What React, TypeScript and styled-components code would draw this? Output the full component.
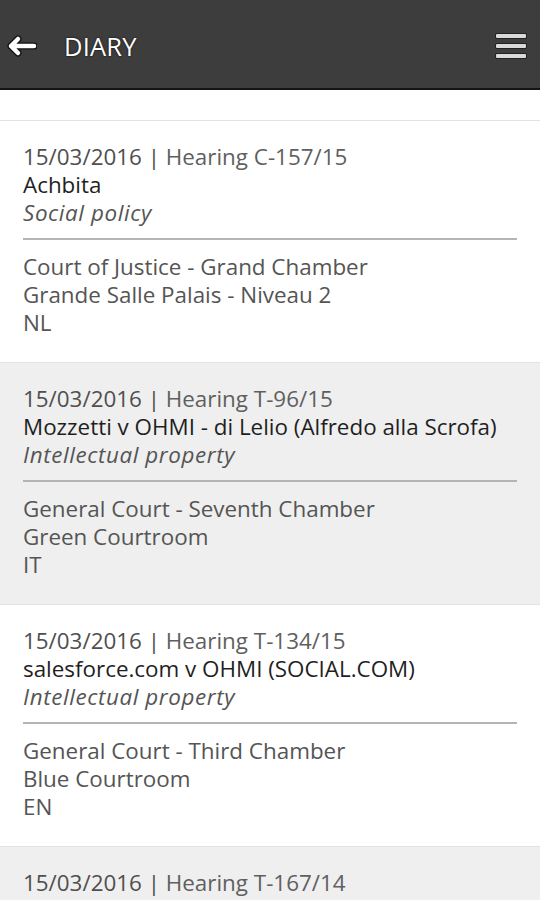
import React from "react";
import styled, { createGlobalStyle } from "styled-components";

const Global = createGlobalStyle`
  html, body { margin: 0; padding: 0; background: #ffffff; }
  body { font-family: "Open Sans", "DejaVu Sans", sans-serif; overflow: hidden; }
  * { box-sizing: border-box; }
`;

const Page = styled.div`
  width: 540px;
  height: 900px;
  overflow: hidden;
  background: #ffffff;
`;

const TopBar = styled.header`
  height: 90px;
  background: #3d3d3d;
  border-bottom: 2px solid #141414;
  display: flex;
  align-items: center;
  padding: 3px 14px 0 5px;
`;

const BackButton = styled.div`
  width: 32px;
  height: 24px;
  display: flex;
  align-items: center;
  justify-content: center;
`;

const Title = styled.h1`
  margin: 0 0 0 27px;
  flex: 1;
  color: #ffffff;
  font-size: 25.5px;
  font-weight: 400;
  letter-spacing: 0.2px;
  text-shadow: 0 0 2px #000;
`;

const Menu = styled.div`
  display: flex;
  flex-direction: column;
  gap: 6px;
  width: 30px;
`;

const MenuBar = styled.span`
  display: block;
  height: 4px;
  background: #d9d9d9;
  border-radius: 1px;
  box-shadow: 0 0 0 1px #222;
`;

const Spacer = styled.div`
  height: 30px;
  background: #ffffff;
`;

const List = styled.div`
  display: flex;
  flex-direction: column;
`;

const Card = styled.div<{ $shaded: boolean }>`
  background: ${(p) => (p.$shaded ? "#efefef" : "#ffffff")};
  border-top: 1px solid #e2e2e2;
  padding: 22px 23px 25px 23px;
  font-size: 22.4px;
  line-height: 28px;
  color: #555555;
`;

const Line = styled.div<{ $tone?: "dark" | "muted" }>`
  white-space: nowrap;
  color: ${(p) => (p.$tone === "dark" ? "#1f1f1f" : "#555555")};
`;

const DateLine = styled.div`
  white-space: nowrap;
  color: #4f4f4f;
`;

const HearingRef = styled.span`
  color: #5f5f5f;
`;

const Subject = styled.div`
  white-space: nowrap;
  font-style: italic;
  letter-spacing: 0.6px;
  color: #555555;
`;

const Divider = styled.hr`
  margin: 11px 0 13px 0;
  border: none;
  height: 2px;
  background: #b4b4b4;
`;

type Hearing = {
  date: string;
  hearing: string;
  title?: string;
  subject?: string;
  court?: string;
  room?: string;
  lang?: string;
};

const data: Hearing[] = [
  {
    date: "15/03/2016",
    hearing: "Hearing C-157/15",
    title: "Achbita",
    subject: "Social policy",
    court: "Court of Justice - Grand Chamber",
    room: "Grande Salle Palais - Niveau 2",
    lang: "NL",
  },
  {
    date: "15/03/2016",
    hearing: "Hearing T-96/15",
    title: "Mozzetti v OHMI - di Lelio (Alfredo alla Scrofa)",
    subject: "Intellectual property",
    court: "General Court - Seventh Chamber",
    room: "Green Courtroom",
    lang: "IT",
  },
  {
    date: "15/03/2016",
    hearing: "Hearing T-134/15",
    title: "salesforce.com v OHMI (SOCIAL.COM)",
    subject: "Intellectual property",
    court: "General Court - Third Chamber",
    room: "Blue Courtroom",
    lang: "EN",
  },
  {
    date: "15/03/2016",
    hearing: "Hearing T-167/14",
    title: "",
    subject: "",
    court: "",
    room: "",
    lang: "",
  },
];

export default function App() {
  return (
    <Page>
      <Global />
      <TopBar>
        <BackButton>
          <svg width="32" height="24" viewBox="0 0 32 24">
            <path
              d="M29 12 H6 M13 5 L6 12 L13 19"
              fill="none"
              stroke="#111"
              strokeWidth="7"
              strokeLinecap="round"
              strokeLinejoin="round"
            />
            <path
              d="M29 12 H6 M13 5 L6 12 L13 19"
              fill="none"
              stroke="#ffffff"
              strokeWidth="4.5"
              strokeLinecap="round"
              strokeLinejoin="round"
            />
          </svg>
        </BackButton>
        <Title>DIARY</Title>
        <Menu>
          <MenuBar />
          <MenuBar />
          <MenuBar />
        </Menu>
      </TopBar>
      <Spacer />
      <List>
        {data.map((h, i) => (
          <Card key={i} $shaded={i % 2 === 1}>
            <DateLine>
              {h.date} | <HearingRef>{h.hearing}</HearingRef>
            </DateLine>
            <Line $tone="dark">{h.title || "\u00a0"}</Line>
            <Subject>{h.subject || "\u00a0"}</Subject>
            <Divider />
            <Line>{h.court || "\u00a0"}</Line>
            <Line>{h.room || "\u00a0"}</Line>
            <Line>{h.lang || "\u00a0"}</Line>
          </Card>
        ))}
      </List>
    </Page>
  );
}
